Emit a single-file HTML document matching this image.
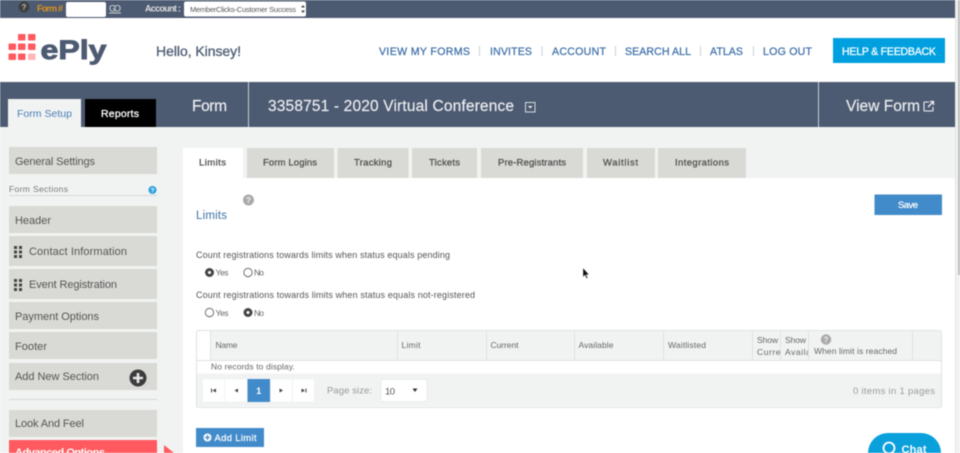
<!DOCTYPE html>
<html><head><meta charset="utf-8"><title>ePly</title>
<style>
html,body{margin:0;padding:0;width:960px;height:453px;overflow:hidden;background:#fff}
svg{display:block;filter:blur(.4px)}
svg svg{filter:none}
text{font-family:"Liberation Sans",sans-serif;white-space:pre}
.s{font-size:11px;fill:#555}
.t{font-size:9.5px;fill:#4f4f4f;stroke:#4f4f4f;stroke-width:.25}
.b{font-size:9px;fill:#555}
.h{font-size:8.5px;fill:#666}
.n{font-size:10.6px;fill:#3f70a8;stroke:#3f70a8;stroke-width:.25}
</style></head><body>
<svg xmlns="http://www.w3.org/2000/svg" width="960" height="453" viewBox="0 0 960 453">
<!-- backgrounds -->
<rect width="960" height="453" fill="#f1f3f3"/>
<rect width="955" height="18" fill="#4d5b72"/>
<rect y="18" width="955" height="64" fill="#fff"/>
<rect y="82" width="955" height="45" fill="#4d5b72"/>
<rect x="183" y="178" width="772" height="275" fill="#fff"/>
<rect x="955" width="1" height="453" fill="#e2e4e4"/>
<rect x="958" y="0" width="2" height="275" fill="#bdbdbd"/>

<!-- top bar -->
<circle cx="24" cy="7" r="5.500" fill="#3f3f3f"/>
<text x="24" y="10" font-size="8" font-weight="bold" fill="#bbb" text-anchor="middle">?</text>
<text x="37" y="11.500" font-size="9" font-weight="bold" fill="#d8901e" textLength="26">Form #</text>
<rect x="66" y="2" width="40" height="15" rx="2" fill="#fff"/>
<text x="109" y="11.500" font-size="9" fill="#ddd" text-decoration="underline" textLength="12">GO</text>
<text x="145" y="11.500" font-size="9" font-weight="bold" fill="#ddd" textLength="36">Account :</text>
<rect x="184" y="1.500" width="122" height="15" rx="2" fill="#fff"/>
<text x="190" y="12" font-size="7.500" fill="#555" textLength="106">MemberClicks-Customer Success</text>
<path d="M301 7.500l2-2.500 2 2.500zM301 10.500l2 2.500 2-2.500z" fill="#444"/>

<!-- logo -->
<g fill="#ff5a5f">
<rect x="18" y="34" width="7.500" height="6.500" rx="1"/><rect x="28" y="34" width="7.500" height="6.500" rx="1"/>
<rect x="8.500" y="43.500" width="7.500" height="6.500" rx="1"/><rect x="18" y="43.500" width="7.500" height="6.500" rx="1"/><rect x="28" y="43.500" width="7.500" height="6.500" rx="1"/>
<rect x="8.500" y="53.500" width="7.500" height="6.500" rx="1"/><rect x="18" y="53.500" width="7.500" height="6.500" rx="1"/>
</g>
<rect x="28" y="53.500" width="7.500" height="6.500" rx="1" fill="#ffb6b8"/>
<text x="40.500" y="59" font-size="27" font-weight="bold" fill="#4d5b72" stroke="#4d5b72" stroke-width=".9" textLength="66" lengthAdjust="spacingAndGlyphs">ePly</text>

<text x="156" y="56" font-size="14" fill="#4d5b72" stroke="#4d5b72" stroke-width=".3" textLength="85">Hello, Kinsey!</text>

<!-- nav -->
<text class="n" x="379" y="55" textLength="91">VIEW MY FORMS</text>
<text class="n" x="490" y="55" textLength="42">INVITES</text>
<text class="n" x="552" y="55" textLength="54">ACCOUNT</text>
<text class="n" x="625" y="55" textLength="66">SEARCH ALL</text>
<text class="n" x="710" y="55" textLength="33">ATLAS</text>
<text class="n" x="763" y="55" textLength="49">LOG OUT</text>
<g fill="#c9d0d8">
<rect x="479" y="46" width="1" height="10"/><rect x="541.500" y="46" width="1" height="10"/><rect x="615" y="46" width="1" height="10"/><rect x="700" y="46" width="1" height="10"/><rect x="753" y="46" width="1" height="10"/>
</g>
<rect x="833" y="38" width="112" height="25" fill="#00a0e0"/>
<text x="842" y="55" font-size="10.600" fill="#fff" stroke="#fff" stroke-width=".25" textLength="94">HELP &amp; FEEDBACK</text>

<!-- dark header -->
<rect x="248" y="82" width="1" height="45" fill="#c9ced6"/>
<rect x="818" y="82" width="1" height="45" fill="#c9ced6"/>
<rect x="8" y="99" width="73" height="28" fill="#f1f3f3"/>
<text x="17" y="117" font-size="10.500" fill="#4a7db5" textLength="55">Form Setup</text>
<rect x="85" y="99" width="71" height="28" fill="#000"/>
<text x="101" y="117" font-size="10.500" fill="#fff" stroke="#fff" stroke-width=".3" textLength="38">Reports</text>
<text x="192" y="111" font-size="15.500" fill="#eef0f3" stroke="#eef0f3" stroke-width=".15" textLength="35">Form</text>
<text x="268" y="111" font-size="15.500" fill="#eef0f3" stroke="#eef0f3" stroke-width=".15" textLength="246">3358751 - 2020 Virtual Conference</text>
<rect x="525.500" y="102.500" width="9.500" height="9.500" fill="none" stroke="#d5d9df"/>
<path d="M528 106h4.500l-2.250 2.500z" fill="#eef0f3"/>
<text x="846" y="111" font-size="15.500" fill="#eef0f3" stroke="#eef0f3" stroke-width=".15" textLength="74">View Form</text>
<path d="M929 102h-4.200a.8.800 0 0 0-.800.800v7.400a.8.800 0 0 0 .800.800h7.400a.8.800 0 0 0 .800-.800v-3.200" fill="none" stroke="#eef0f3" stroke-width="1.100"/>
<path d="M928 107l5-5M930 101.500h3.500v3.500" fill="none" stroke="#eef0f3" stroke-width="1.300"/>

<!-- sidebar -->
<g fill="#d9d9d5">
<rect x="9" y="147" width="148" height="27"/>
<rect x="9" y="206" width="148" height="27"/>
<rect x="9" y="236" width="148" height="30"/>
<rect x="9" y="269" width="148" height="30"/>
<rect x="9" y="302" width="148" height="27"/>
<rect x="9" y="332" width="148" height="27"/>
<rect x="9" y="363" width="148" height="27"/>
<rect x="9" y="410" width="148" height="27"/>
</g>
<rect x="9" y="195" width="148" height="1" fill="#d5d8d8"/>
<rect x="9" y="399" width="148" height="1" fill="#d5d8d8"/>
<rect x="9" y="440" width="148" height="13" fill="#ff5a5f"/>
<path d="M164 445l10 8h-10z" fill="#ff5a5f"/>
<text class="s" x="15" y="165" textLength="80">General Settings</text>
<text x="9" y="192" font-size="8.500" fill="#777" textLength="59">Form Sections</text>
<circle cx="152.500" cy="190" r="4" fill="#29a0df"/>
<text x="152.500" y="192.500" font-size="6.500" font-weight="bold" fill="#fff" text-anchor="middle">?</text>
<text class="s" x="15" y="224" textLength="36">Header</text>
<g fill="#444">
<rect x="14" y="246" width="3" height="3"/><rect x="19" y="246" width="3" height="3"/><rect x="14" y="250.500" width="3" height="3"/><rect x="19" y="250.500" width="3" height="3"/><rect x="14" y="255" width="3" height="3"/><rect x="19" y="255" width="3" height="3"/>
<rect x="14" y="279" width="3" height="3"/><rect x="19" y="279" width="3" height="3"/><rect x="14" y="283.500" width="3" height="3"/><rect x="19" y="283.500" width="3" height="3"/><rect x="14" y="288" width="3" height="3"/><rect x="19" y="288" width="3" height="3"/>
</g>
<text class="s" x="29" y="255" textLength="98">Contact Information</text>
<text class="s" x="29" y="288" textLength="88">Event Registration</text>
<text class="s" x="15" y="320" textLength="84">Payment Options</text>
<text class="s" x="15" y="350" textLength="32">Footer</text>
<text class="s" x="15" y="380" textLength="84">Add New Section</text>
<circle cx="138" cy="378" r="8.500" fill="#3c3c3c"/>
<path d="M133 378h10M138 373v10" stroke="#e8e8e8" stroke-width="2.600"/>
<text class="s" x="15" y="427" textLength="69">Look And Feel</text>
<text x="15" y="456" font-size="11" fill="#fff" font-weight="bold" textLength="90">Advanced Options</text>

<!-- tabs -->
<rect x="183" y="148" width="60" height="30" fill="#fff"/>
<g fill="#d9d9d5">
<rect x="247" y="148" width="87" height="30"/>
<rect x="337.500" y="148" width="71" height="30"/>
<rect x="412" y="148" width="65" height="30"/>
<rect x="481" y="148" width="102" height="30"/>
<rect x="587" y="148" width="68" height="30"/>
<rect x="658" y="148" width="88" height="30"/>
</g>
<text class="t" x="199" y="165.500" textLength="27">Limits</text>
<text class="t" x="263" y="165.500" textLength="54">Form Logins</text>
<text class="t" x="354" y="165.500" textLength="38">Tracking</text>
<text class="t" x="429" y="165.500" textLength="31">Tickets</text>
<text class="t" x="498" y="165.500" textLength="68">Pre-Registrants</text>
<text class="t" x="603" y="165.500" textLength="35">Waitlist</text>
<text class="t" x="675" y="165.500" textLength="54">Integrations</text>

<!-- form content -->
<circle cx="248.500" cy="200" r="5.500" fill="#aaa"/>
<text x="248.500" y="203" font-size="8.500" font-weight="bold" fill="#eee" text-anchor="middle">?</text>
<text x="196" y="219" font-size="11.500" fill="#3f70a8" textLength="31">Limits</text>
<rect x="874.500" y="194.500" width="67.500" height="20.500" fill="#428bca"/>
<text x="898" y="208" font-size="9.500" fill="#fff" stroke="#fff" stroke-width=".2" textLength="20">Save</text>

<text class="b" x="196" y="258" textLength="254">Count registrations towards limits when status equals pending</text>
<circle cx="209.500" cy="272.500" r="4.500" fill="#444"/><circle cx="209.500" cy="272.500" r="1.500" fill="#fff"/>
<text class="h" x="215.500" y="275.500" textLength="13">Yes</text>
<circle cx="248" cy="272.500" r="4.200" fill="#fff" stroke="#555" stroke-width=".8"/>
<text class="h" x="254" y="275.500" textLength="10">No</text>
<text class="b" x="196" y="298" textLength="279">Count registrations towards limits when status equals not-registered</text>
<circle cx="209.500" cy="312.500" r="4.200" fill="#fff" stroke="#555" stroke-width=".8"/>
<text class="h" x="215.500" y="316" textLength="13">Yes</text>
<circle cx="248" cy="312.500" r="4.500" fill="#444"/><circle cx="248" cy="312.500" r="1.500" fill="#fff"/>
<text class="h" x="254" y="316" textLength="10">No</text>

<!-- cursor -->
<path d="M583 268v9l2-2 1.500 3.500 1.200-.6-1.500-3.300h2.800z" fill="#111" stroke="#ddd" stroke-width=".4"/>

<!-- grid -->
<rect x="196.500" y="330.500" width="745" height="77" rx="2" fill="#fff" stroke="#dfe2e2"/>
<rect x="210" y="331" width="731" height="29" fill="#f1f3f3"/>
<rect x="197" y="373.500" width="744" height="33" fill="#f1f3f3"/>
<rect x="197" y="360" width="744" height="1" fill="#dfe2e2"/>
<g fill="#dfe2e2">
<rect x="210" y="331" width="1" height="29"/><rect x="397" y="331" width="1" height="29"/><rect x="486" y="331" width="1" height="29"/><rect x="574" y="331" width="1" height="29"/><rect x="663" y="331" width="1" height="29"/><rect x="752" y="331" width="1" height="29"/><rect x="780" y="331" width="1" height="29"/><rect x="808" y="331" width="1" height="29"/><rect x="912" y="331" width="1" height="29"/>
</g>
<text class="h" x="215.500" y="348" textLength="22">Name</text>
<text class="h" x="401.500" y="348" textLength="19">Limit</text>
<text class="h" x="490.500" y="348" textLength="28">Current</text>
<text class="h" x="578.500" y="348" textLength="35">Available</text>
<text class="h" x="668" y="348" textLength="38">Waitlisted</text>
<text class="h" x="757" y="343" textLength="21">Show</text>
<svg x="757" y="346" width="23" height="12"><text class="h" x="0" y="9" letter-spacing=".55">Current</text></svg>
<text class="h" x="785" y="343" textLength="21">Show</text>
<svg x="785" y="346" width="23" height="12"><text class="h" x="0" y="9" letter-spacing=".55">Available</text></svg>
<circle cx="826" cy="339.500" r="5.200" fill="#aaa"/>
<text x="826" y="342.500" font-size="8" font-weight="bold" fill="#eee" text-anchor="middle">?</text>
<text class="h" x="814" y="354" textLength="83">When limit is reached</text>
<text class="h" x="211" y="369.500" textLength="84">No records to display.</text>

<!-- pager -->
<g fill="#fff">
<rect x="203" y="379.500" width="21" height="22"/><rect x="225" y="379.500" width="22" height="22"/><rect x="271" y="379.500" width="21" height="22"/><rect x="293" y="379.500" width="21" height="22"/>
</g>
<rect x="247.500" y="379" width="22.500" height="23" fill="#428bca"/>
<text x="258.700" y="394" font-size="9" font-weight="bold" fill="#fff" text-anchor="middle">1</text>
<g fill="#444">
<path d="M211 388.500h1v4h-1zM216 388.500v4l-3.500-2z"/>
<path d="M238 388.500v4l-3.500-2z"/>
<path d="M279.500 388.500v4l3.500-2z"/>
<path d="M301.500 388.500v4l3.500-2zM305.500 388.500h1v4h-1z"/>
</g>
<text x="327" y="393.500" font-size="9.500" fill="#999" textLength="45">Page size:</text>
<rect x="381" y="379.500" width="46" height="22" rx="2" fill="#fff" stroke="#e6e8e8" stroke-width=".8"/>
<text x="385" y="394.500" font-size="9.500" fill="#555" textLength="10">10</text>
<path d="M412.500 388.500h5l-2.500 3.500z" fill="#333"/>
<text x="853" y="394" font-size="9.500" fill="#999" textLength="82">0 items in 1 pages</text>

<!-- add limit -->
<rect x="196" y="428" width="68" height="19" fill="#428bca"/>
<circle cx="207.500" cy="437.500" r="4" fill="#fff"/>
<path d="M205 437.500h5M207.500 435v5" stroke="#428bca" stroke-width="1.300"/>
<text x="214.500" y="441" font-size="9.500" fill="#fff" stroke="#fff" stroke-width=".2" textLength="42">Add Limit</text>

<!-- chat -->
<path d="M868 453a20 20 0 0 1 20-20h33a20 20 0 0 1 20 20z" fill="#0aa0dc"/>
<circle cx="889" cy="448" r="5.500" fill="none" stroke="#fff" stroke-width="1.800"/>
<text x="901.500" y="453" font-size="11" font-weight="bold" fill="#fff" textLength="25">Chat</text>
</svg>
</body></html>
